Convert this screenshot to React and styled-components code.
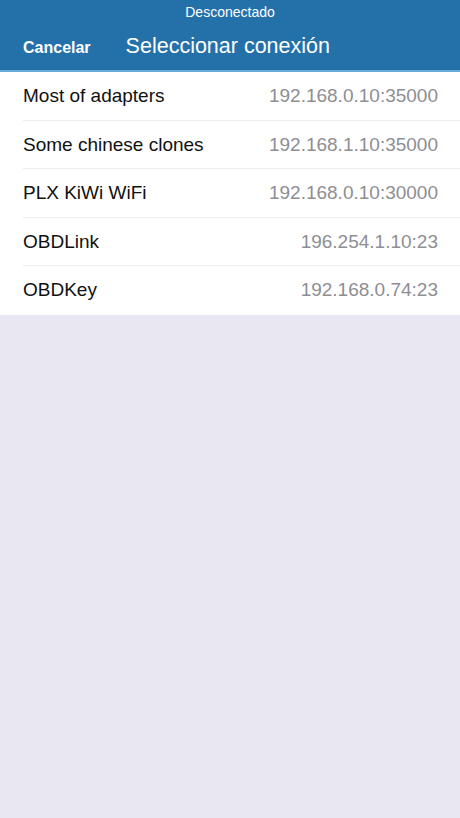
import React from 'react'
import styled, { createGlobalStyle } from 'styled-components';

const GlobalStyle = createGlobalStyle`
  html, body {
    margin: 0;
    padding: 0;
    background: #e9e8f2;
    font-family: "Liberation Sans", Arial, sans-serif;
  }
`;

const Page = styled.div`
  width: 460px;
  min-height: 818px;
  background: #e9e8f2;
`;

const Header = styled.header`
  background: #2471aa;
  height: 70px;
  border-bottom: 2px solid #6aaad8;
  display: flex;
  flex-direction: column;
`;

const Status = styled.div`
  height: 24px;
  display: flex;
  align-items: center;
  justify-content: center;
  color: #ffffff;
  font-size: 14px;
`;

const NavBar = styled.div`
  flex: 1;
  display: flex;
  align-items: center;
  padding: 0 23px 2px;
  gap: 35px;
`;

const Cancel = styled.span`
  color: #ffffff;
  font-size: 16px;
  font-weight: bold;
  margin-top: 3px;
`;

const Title = styled.span`
  color: #ffffff;
  font-size: 21.5px;
`;

const List = styled.ul`
  list-style: none;
  margin: 0;
  padding: 0;
  background: #ffffff;
`;

const Row = styled.li`
  height: 48.5px;
  display: flex;
  align-items: center;
  justify-content: space-between;
  padding: 0 22px 0 23px;
  box-sizing: border-box;
  position: relative;
  font-size: 19px;

  &:not(:last-child)::after {
    content: '';
    position: absolute;
    left: 23px;
    right: 0;
    bottom: 0;
    height: 1px;
    background: #ececf0;
  }
`;

const Name = styled.span`
  color: #111111;
`;

const Address = styled.span`
  color: #8e8e93;
`;

const connections = [
  { name: 'Most of adapters', address: '192.168.0.10:35000' },
  { name: 'Some chinese clones', address: '192.168.1.10:35000' },
  { name: 'PLX KiWi WiFi', address: '192.168.0.10:30000' },
  { name: 'OBDLink', address: '196.254.1.10:23' },
  { name: 'OBDKey', address: '192.168.0.74:23' },
];

function App() {
  return (
    <Page>
      <GlobalStyle />
      <Header>
        <Status>Desconectado</Status>
        <NavBar>
          <Cancel>Cancelar</Cancel>
          <Title>Seleccionar conexión</Title>
        </NavBar>
      </Header>
      <List>
        {connections.map((c) => (
          <Row key={c.name}>
            <Name>{c.name}</Name>
            <Address>{c.address}</Address>
          </Row>
        ))}
      </List>
    </Page>
  );
}

export default App;
